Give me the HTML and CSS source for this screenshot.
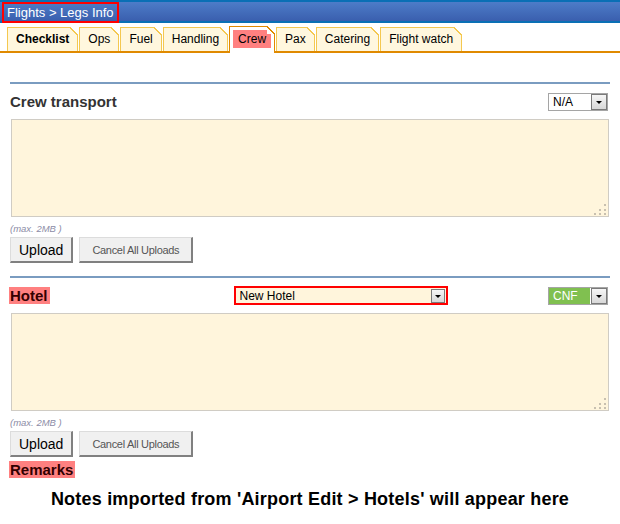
FILE: index.html
```html
<!DOCTYPE html>
<html lang="en">
<head>
  <meta charset="UTF-8" />
  <title>Flights - Legs Info</title>
  <link rel="stylesheet" href="styles.css">
</head>
<body>

  <div class="topbar"><span class="crumb">Flights &gt; Legs Info</span></div>

  <div class="tabs">
    <div class="tab tab-bold">Checklist</div>
    <div class="tab">Ops</div>
    <div class="tab">Fuel</div>
    <div class="tab">Handling</div>
    <div class="tab tab-active"><span class="mark">Crew</span></div>
    <div class="tab">Pax</div>
    <div class="tab">Catering</div>
    <div class="tab">Flight watch</div>
  </div>

  <div class="content">
    <div class="rule"></div>
    <div class="row">
      <span class="label">Crew transport</span>
      <div class="combo combo-status">
        <span class="combo-text">N/A</span>
        <span class="combo-arrow"></span>
      </div>
    </div>
    <div class="note-box"></div>
    <div class="max">(max. 2MB )</div>
    <div class="buttons">
      <button class="btn btn-upload">Upload</button>
      <button class="btn btn-cancel">Cancel All Uploads</button>
    </div>

    <div class="rule rule-second"></div>
    <div class="row">
      <span class="label mark">Hotel</span>
      <div class="combo combo-hotel">
        <span class="combo-text">New Hotel</span>
        <span class="combo-arrow"></span>
      </div>
      <div class="combo combo-status combo-cnf">
        <span class="combo-text">CNF</span>
        <span class="combo-arrow"></span>
      </div>
    </div>
    <div class="note-box"></div>
    <div class="max">(max. 2MB )</div>
    <div class="buttons">
      <button class="btn btn-upload">Upload</button>
      <button class="btn btn-cancel">Cancel All Uploads</button>
    </div>

    <div class="remarks"><span class="label mark">Remarks</span></div>
    <div class="notes">Notes imported from 'Airport Edit &gt; Hotels' will appear here</div>
  </div>

</body>
</html>
```

FILE: styles.css
```css
body {
  margin: 0;
  font-family: "Liberation Sans", Arial, sans-serif;
  color: #000;
  background: #fff;
}

/* top bar */
.topbar {
  height: 23px;
  background: linear-gradient(#0a6fb5 0, #0a6fb5 2px, #4d7cc8 2px, #3a5fae 21px, #0a6fb5 21px);
}

.crumb {
  display: inline-block;
  box-sizing: border-box;
  height: 21px;
  margin: 2px 0 0 2px;
  padding: 0 3px;
  border: 2px solid #f00;
  color: #fff;
  font-size: 13px;
  line-height: 17px;
}

/* tabs */
.tabs {
  display: flex;
  align-items: flex-end;
  margin-top: 4px;
  padding-left: 7px;
  height: 24px;
  border-bottom: 2px solid #e08a00;
}

.tab {
  position: relative;
  box-sizing: border-box;
  height: 24px;
  margin-right: 1px;
  padding: 0 8px;
  border: 1px solid #f4c850;
  border-bottom: none;
  background: #fff7de;
  font-size: 12px;
  line-height: 23px;
}

.tab::before {
  content: "";
  position: absolute;
  top: -1px;
  right: -1px;
  width: 8px;
  height: 8px;
  background: linear-gradient(to bottom left, #fff 0, #fff 46%, #f4c850 46%, #f4c850 57%, #fff7de 57%);
}

.tab-bold {
  font-weight: bold;
}

.tab-active {
  height: 27px;
  margin-bottom: -2px;
  padding: 0 3px;
  border-color: #e08a00;
  background: #fff;
  line-height: 24px;
}

.tab-active::before {
  background: linear-gradient(to bottom left, #fff 0, #fff 46%, #e08a00 46%, #e08a00 57%, #fff 57%);
}

.tab-active .mark {
  padding: 2px 5px;
}

.mark {
  background: #ff8080;
}

/* content */
.content {
  padding: 0 10px;
}

.rule {
  height: 2px;
  margin-top: 29px;
  background: #7a9cc0;
}

.rule-second {
  margin-top: 13px;
}

.row {
  display: flex;
  align-items: center;
  height: 19px;
  margin-top: 8px;
}

.label {
  font-size: 15px;
  font-weight: bold;
  color: #333;
}

.label.mark {
  margin-left: -1px;
  padding: 0 2px 0 1px;
  color: #300;
  line-height: 17px;
}

.combo {
  display: flex;
  align-items: center;
  box-sizing: border-box;
  font-size: 12px;
}

.combo-text {
  flex: 1;
  padding-left: 4px;
}

.combo-arrow {
  position: relative;
  box-sizing: border-box;
  width: 16px;
  height: 16px;
  border: 1px solid #7a7a7a;
  background: linear-gradient(#f6f6f6, #d8d8d8);
}

.combo-arrow::after {
  content: "";
  position: absolute;
  left: 4px;
  top: 6px;
  border-left: 3px solid transparent;
  border-right: 3px solid transparent;
  border-top: 3px solid #000;
}

.combo-status {
  width: 60px;
  height: 18px;
  margin-left: auto;
  margin-right: 2px;
  border: 1px solid #a5a5a5;
  background: #fff;
  color: #000;
}

.combo-cnf {
  height: 18px;
  background: linear-gradient(to right, #80c050 0, #80c050 41px, #fff 41px);
  color: #fff;
}

.combo-hotel {
  width: 214px;
  height: 19px;
  margin-left: 184px;
  border: 2px solid #f00;
  background: #fff5dc;
}

.combo-hotel .combo-arrow {
  width: 14px;
  height: 14px;
  margin-right: 1px;
}

.combo-hotel .combo-arrow::after {
  left: 3px;
  top: 5px;
}

.note-box {
  position: relative;
  box-sizing: border-box;
  height: 98px;
  margin: 8px 1px 0 1px;
  border: 1px solid #d0ccc4;
  background: #fff5dc;
}

.note-box::after {
  content: "";
  position: absolute;
  right: 2px;
  bottom: 1px;
  width: 2px;
  height: 2px;
  background: #c8c0b0;
  box-shadow: -5px 0 #c8c0b0, -10px 0 #c8c0b0, 0 -4px #c8c0b0, -5px -4px #c8c0b0, 0 -9px #c8c0b0;
}

.max {
  margin-top: 6px;
  font-size: 9.5px;
  font-style: italic;
  line-height: 11px;
  color: #8c8ca6;
}

.buttons {
  display: flex;
  gap: 6px;
  margin-top: 3px;
}

.btn {
  box-sizing: border-box;
  height: 26px;
  margin: 0;
  border-top: 1px solid #dcdcdc;
  border-left: 1px solid #dcdcdc;
  border-right: 2px solid #808080;
  border-bottom: 2px solid #808080;
  background: #f0f0f0;
  font-family: "Liberation Sans", Arial, sans-serif;
}

.btn-upload {
  padding: 0 8px;
  font-size: 14px;
  color: #000;
}

.btn-cancel {
  padding: 0 12px;
  font-size: 11px;
  letter-spacing: -0.3px;
  color: #555;
}

.remarks {
  margin-top: 4px;
  line-height: 16px;
}

.notes {
  margin-top: 10px;
  text-align: center;
  font-size: 18px;
  font-weight: bold;
  letter-spacing: 0.2px;
  line-height: 22px;
}
```
